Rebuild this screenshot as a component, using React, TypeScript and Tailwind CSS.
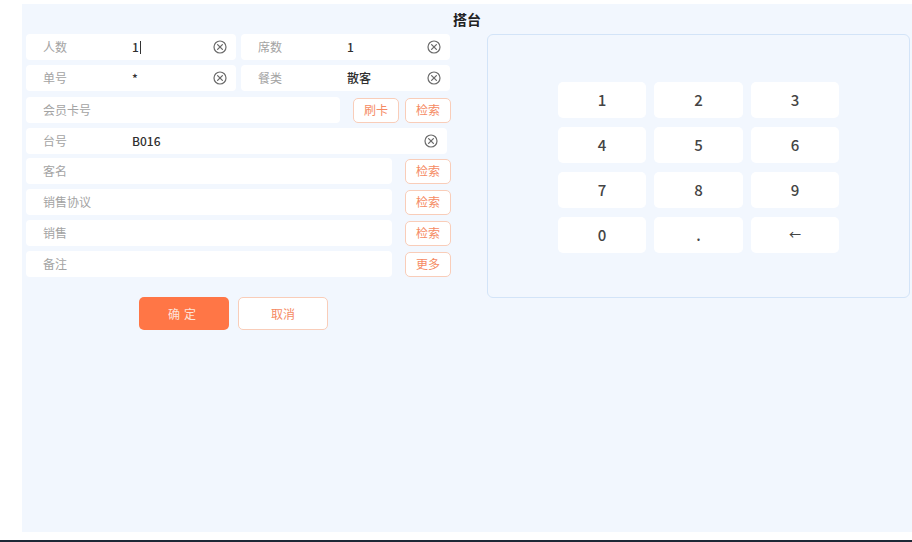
const font = { fontFamily: '"Noto Sans CJK SC", "Noto Sans", sans-serif' };

function ClearIcon() {
  return (
    <svg width="14" height="14" viewBox="0 0 14 14" className="shrink-0">
      <circle cx="7" cy="7" r="6" fill="none" stroke="#6b6b6b" strokeWidth="1.2" />
      <path d="M4.6 4.6 L9.4 9.4 M9.4 4.6 L4.6 9.4" stroke="#6b6b6b" strokeWidth="1.3" strokeLinecap="round" />
    </svg>
  );
}

type FieldProps = {
  label: string;
  value?: string;
  clear?: boolean;
  caret?: boolean;
  className?: string;
};

function Field({ label, value, clear, caret, className }: FieldProps) {
  return (
    <div
      className={`flex h-[26px] items-center rounded-[4px] bg-white pl-[17px] pr-[9px] ${className ?? ""}`}
    >
      <span className="w-[89px] shrink-0 text-[12px] text-[#a3a3a3]">{label}</span>
      <span className="flex-1 text-[12px] font-medium text-[#2f2f2f]">
        {value}
        {caret ? <span className="ml-[1px] inline-block h-[13px] w-[1px] translate-y-[2px] bg-[#333]" /> : null}
      </span>
      {clear ? <ClearIcon /> : null}
    </div>
  );
}

function SmallButton({ text }: { text: string }) {
  return (
    <button className="flex h-[25px] w-[46px] items-center justify-center rounded-[5px] border border-[#f9cdb9] bg-white text-[12px] text-[#f58a63]">
      {text}
    </button>
  );
}

const keys = ["1", "2", "3", "4", "5", "6", "7", "8", "9", "0", ".", "←"];

export default function App() {
  return (
    <div className="flex h-[542px] w-[912px] flex-col bg-white" style={font}>
      <div className="ml-[22px] mt-[4px] flex h-[528px] w-[890px] flex-col bg-[#f2f7fe]">
        <h1 className="h-[30px] pt-[5px] text-center text-[14px] font-bold leading-[20px] text-[#222]">
          搭台
        </h1>

        <div className="flex">
          <div className="ml-[4px] flex w-[426px] flex-col">
            <div className="flex gap-[5px]">
              <Field label="人数" value="1" clear caret className="w-[210px]" />
              <Field label="席数" value="1" clear className="w-[209px]" />
            </div>
            <div className="mt-[5px] flex gap-[5px]">
              <Field label="单号" value="*" clear className="w-[210px]" />
              <Field label="餐类" value="散客" clear className="w-[209px]" />
            </div>
            <div className="mt-[6px] flex items-center">
              <Field label="会员卡号" className="w-[314px]" />
              <div className="ml-[13px]">
                <SmallButton text="刷卡" />
              </div>
              <div className="ml-[6px]">
                <SmallButton text="检索" />
              </div>
            </div>
            <div className="mt-[5px] flex">
              <Field label="台号" value="B016" clear className="w-[421px]" />
            </div>
            {[
              { label: "客名", btn: "检索" },
              { label: "销售协议", btn: "检索" },
              { label: "销售", btn: "检索" },
              { label: "备注", btn: "更多" },
            ].map((row, i) => (
              <div key={row.label} className={`flex items-center ${i === 0 ? "mt-[4px]" : "mt-[5px]"}`}>
                <Field label={row.label} className="w-[366px]" />
                <div className="ml-[13px]">
                  <SmallButton text={row.btn} />
                </div>
              </div>
            ))}

            <div className="mt-[20px] flex pl-[113px]">
              <button className="flex h-[33px] w-[90px] items-center justify-center rounded-[5px] bg-[#ff7646] text-[12px] tracking-[4px] text-[#fde4da]">
                确定
              </button>
              <button className="ml-[9px] flex h-[33px] w-[90px] items-center justify-center rounded-[5px] border border-[#f9cdb9] bg-white text-[12px] text-[#f58a63]">
                取消
              </button>
            </div>
          </div>

          <div className="ml-[35px] flex h-[264px] w-[423px] items-center justify-center rounded-[6px] border-[1.5px] border-[#d3e4f8] pt-[3px]">
            <div className="grid grid-cols-[88px_89px_88px] gap-x-[8px] gap-y-[9px]">
              {keys.map((k) => (
                <button
                  key={k}
                  className={`flex h-[36px] items-center justify-center rounded-[5px] bg-white font-medium text-[#444] ${k === "←" ? "text-[12px]" : "text-[15px]"}`}
                >
                  {k}
                </button>
              ))}
            </div>
          </div>
        </div>
      </div>
      <div className="mt-auto h-[2px] w-full bg-[#1c2836]" />
    </div>
  );
}
